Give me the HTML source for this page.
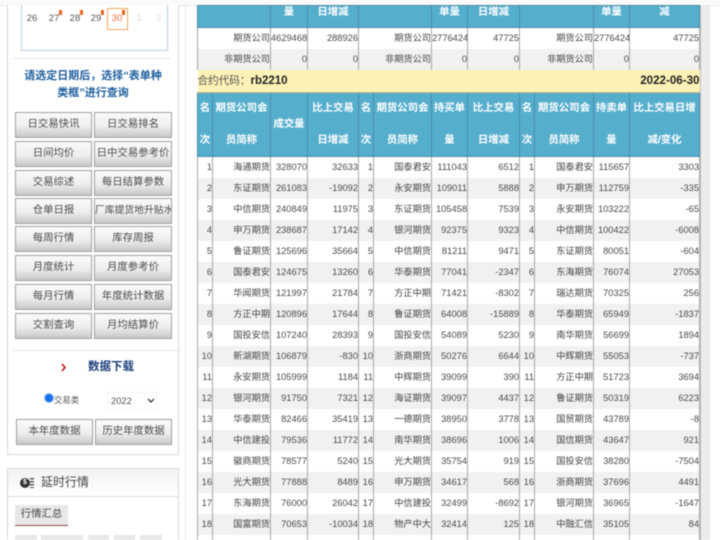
<!DOCTYPE html>
<html><head><meta charset="utf-8">
<style>
html,body{margin:0;padding:0;background:#fff;}
#p{position:relative;width:720px;height:540px;overflow:hidden;background:#fff;font-family:"Liberation Sans","Noto Sans CJK SC",sans-serif;filter:blur(.4px);}
.a{position:absolute;}
.b{position:absolute;width:75px;height:24px;line-height:24px;border:1px solid #a0a0a0;background:linear-gradient(#fafafa,#eeeeee 55%,#c8c8c8);text-align:center;font-size:10.4px;color:#4a4a4a;white-space:nowrap;overflow:hidden;box-sizing:content-box;}
.r{width:76px;}
.d{position:absolute;top:13px;width:20px;text-align:center;font-size:9.6px;color:#555;}
.m{position:absolute;width:3px;height:5px;background:#e8641e;top:10px;}
table{position:absolute;left:197px;top:5px;width:502px;border-collapse:collapse;table-layout:fixed;}
td{padding:0;height:21px;line-height:21px;font-size:9.3px;color:#4a4a4a;text-align:right;border-left:1px solid #a8a8a8;border-right:1px solid #a8a8a8;white-space:nowrap;overflow:hidden;box-sizing:border-box;}
td.n{font-size:9.2px;color:#444;}
tr.g td{background:#f1f1f1;}
tr.h td{background:#56aecd;color:#fff;font-weight:bold;font-size:10.4px;text-align:center;border:1px solid #4a8ca8;height:32px;line-height:31px;}
tr.h1 td{border-bottom:0;}
tr.h2 td{border-top:0;}
tr.t td{height:22px;line-height:13px;vertical-align:top;border-bottom:1px solid #4a8ca8;}
tr.y td{background:#fdf2b6;border:0;border-bottom:1px solid #c9b98a;color:#222;font-size:10px;height:21px;}
</style></head><body><div id="p">
<div class="a" style="left:0;top:0;width:720px;height:5px;background:#fafafa;border-bottom:1px solid #e8e8e8;"></div>
<!-- left panel -->
<div class="a" style="left:7px;top:5px;width:170px;height:449px;border:1px solid #d8d8d8;border-top:0;background:#fff;"></div>
<div class="a" style="left:185px;top:5px;width:1px;height:535px;background:#e6e6e6;"></div>
<div class="a" style="left:21px;top:5px;width:145px;height:45px;border:1px solid #b9cde3;border-top:0;"></div>
<div class="d" style="left:22px;">26</div><div class="d" style="left:44px;">27</div><div class="d" style="left:65px;">28</div><div class="d" style="left:86px;">29</div>
<div class="a" style="left:107px;top:8px;width:19px;height:20px;border:1px solid #f0a860;"></div>
<div class="d" style="left:107px;color:#f0703c;">30</div>
<div class="d" style="left:129px;color:#ddd;">1</div><div class="d" style="left:149px;color:#ddd;">2</div>
<div class="m" style="left:59px;"></div><div class="m" style="left:80px;"></div><div class="m" style="left:101px;"></div><div class="m" style="left:122px;"></div>
<div class="a" style="left:14px;top:58px;width:156px;height:1px;background:#e4e4e4;"></div>
<div class="a" style="left:14px;top:68px;width:158px;text-align:center;font-size:11px;line-height:17px;font-weight:bold;color:#1f5f9e;">请选定日期后，选择“表单种<br>类框”进行查询</div>

<div class="b" style="left:15px;top:112px;">日交易快讯</div><div class="b r" style="left:94px;top:112px;">日交易排名</div>
<div class="b" style="left:15px;top:141px;">日间均价</div><div class="b r" style="left:94px;top:141px;">日中交易参考价</div>
<div class="b" style="left:15px;top:170px;">交易综述</div><div class="b r" style="left:94px;top:170px;">每日结算参数</div>
<div class="b" style="left:15px;top:198px;">仓单日报</div><div class="b r" style="left:94px;top:198px;font-size:9.8px;">厂库提货地升贴水</div>
<div class="b" style="left:15px;top:226px;">每周行情</div><div class="b r" style="left:94px;top:226px;">库存周报</div>
<div class="b" style="left:15px;top:255px;">月度统计</div><div class="b r" style="left:94px;top:255px;">月度参考价</div>
<div class="b" style="left:15px;top:284px;">每月行情</div><div class="b r" style="left:94px;top:284px;">年度统计数据</div>
<div class="b" style="left:15px;top:313px;">交割查询</div><div class="b r" style="left:94px;top:313px;">月均结算价</div>

<div class="a" style="left:14px;top:350px;width:164px;height:1px;background:#e8e8e8;"></div>
<svg class="a" style="left:60px;top:363px;" width="7" height="9"><path d="M2 1 L5 4.5 L2 8" fill="none" stroke="#c0141c" stroke-width="1.6"/></svg>
<div class="a" style="left:88px;top:360px;font-size:11.5px;line-height:15px;font-weight:bold;color:#1d3f7c;">数据下载</div>
<div class="a" style="left:44px;top:393px;width:8px;height:8px;border-radius:50%;background:#1a73e8;border:1px solid #9cc0ee;"></div>
<div class="a" style="left:54px;top:395px;font-size:8.4px;line-height:11px;color:#555;">交易类</div>
<div class="a" style="left:107px;top:392px;width:50px;height:18px;border:1px solid #f4f4f4;box-sizing:border-box;"></div>
<div class="a" style="left:111px;top:395px;font-size:9.4px;line-height:12px;color:#555;">2022</div>
<svg class="a" style="left:147px;top:398px;" width="8" height="6"><path d="M1 1 L4 4 L7 1" fill="none" stroke="#444" stroke-width="1.4"/></svg>
<div class="b" style="left:16px;top:419px;">本年度数据</div><div class="b" style="left:95px;top:419px;">历史年度数据</div>

<!-- second panel -->
<div class="a" style="left:7px;top:468px;width:170px;height:80px;border:1px solid #d8d8d8;background:#fff;"></div>
<div class="a" style="left:8px;top:469px;width:170px;height:27px;background:linear-gradient(#f3f3f3,#fff);border-bottom:1px solid #dcdcdc;"></div>
<div class="a" style="left:20px;top:478px;width:10px;height:10px;line-height:10px;text-align:center;border-radius:50%;background:#333;color:#fff;font-size:7px;font-weight:bold;">$</div>
<div class="a" style="left:30px;top:478px;width:4px;height:10px;background:repeating-linear-gradient(#555 0 1.5px,#fff 1.5px 3px);"></div>
<div class="a" style="left:41px;top:474px;font-size:12px;line-height:17px;color:#444;">延时行情</div>
<div class="a" style="left:15px;top:505px;width:53px;height:20px;line-height:20px;background:#e8e8e8;border-bottom:1px solid #8a4a4a;text-align:center;font-size:10.4px;color:#444;">行情汇总</div>
<div class="a" style="left:15px;top:535px;width:22px;height:5px;background:#e8e8e8;"></div>
<div class="a" style="left:41px;top:535px;width:42px;height:5px;background:#e8e8e8;"></div>
<div class="a" style="left:88px;top:535px;width:21px;height:5px;background:#e8e8e8;"></div>
<div class="a" style="left:114px;top:535px;width:21px;height:5px;background:#e8e8e8;"></div>
<div class="a" style="left:140px;top:535px;width:22px;height:5px;background:#e8e8e8;"></div>

<!-- right strip -->
<div class="a" style="left:699px;top:5px;width:2px;height:535px;background:#bdbdbd;"></div>
<div class="a" style="left:701px;top:5px;width:9px;height:535px;background:#ececec;"></div>

<table>
<colgroup><col style="width:15px"><col style="width:58px"><col style="width:37px"><col style="width:51px"><col style="width:15px"><col style="width:58px"><col style="width:36px"><col style="width:52px"><col style="width:15px"><col style="width:59px"><col style="width:36px"><col style="width:70px"></colgroup>
<tr class="h t"><td colspan="2"></td><td>量</td><td>日增减</td><td colspan="2"></td><td>单量</td><td>日增减</td><td colspan="2"></td><td>单量</td><td>减</td></tr>
<tr><td colspan="2" class="n">期货公司</td><td>4629468</td><td>288926</td><td colspan="2" class="n">期货公司</td><td>2776424</td><td>47725</td><td colspan="2" class="n">期货公司</td><td>2776424</td><td>47725</td></tr>
<tr class="g"><td colspan="2" class="n">非期货公司</td><td>0</td><td>0</td><td colspan="2" class="n">非期货公司</td><td>0</td><td>0</td><td colspan="2" class="n">非期货公司</td><td>0</td><td>0</td></tr>
<tr class="y"><td colspan="6" style="text-align:left;font-size:10.6px;color:#555;">合约代码：<b style="color:#222;font-size:11.5px;">rb2210</b></td><td colspan="6"><b style="font-size:11.6px;">2022-06-30</b></td></tr>
<tr class="h h1"><td>名</td><td>期货公司会</td><td rowspan="2" style="border-bottom:1px solid #4a8ca8;">成交量</td><td>比上交易</td><td>名</td><td>期货公司会</td><td>持买单</td><td>比上交易</td><td>名</td><td>期货公司会</td><td>持卖单</td><td>比上交易日增</td></tr>
<tr class="h h2"><td>次</td><td>员简称</td><td>日增减</td><td>次</td><td>员简称</td><td>量</td><td>日增减</td><td>次</td><td>员简称</td><td>量</td><td>减/变化</td></tr>
<tr><td>1</td><td class="n">海通期货</td><td>328070</td><td>32633</td><td>1</td><td class="n">国泰君安</td><td>111043</td><td>6512</td><td>1</td><td class="n">国泰君安</td><td>115657</td><td>3303</td></tr>
<tr class="g"><td>2</td><td class="n">东证期货</td><td>261083</td><td>-19092</td><td>2</td><td class="n">永安期货</td><td>109011</td><td>5888</td><td>2</td><td class="n">申万期货</td><td>112759</td><td>-335</td></tr>
<tr><td>3</td><td class="n">中信期货</td><td>240849</td><td>11975</td><td>3</td><td class="n">东证期货</td><td>105458</td><td>7539</td><td>3</td><td class="n">永安期货</td><td>103222</td><td>-65</td></tr>
<tr class="g"><td>4</td><td class="n">申万期货</td><td>238687</td><td>17142</td><td>4</td><td class="n">银河期货</td><td>92375</td><td>9323</td><td>4</td><td class="n">中信期货</td><td>100422</td><td>-6008</td></tr>
<tr><td>5</td><td class="n">鲁证期货</td><td>125696</td><td>35664</td><td>5</td><td class="n">中信期货</td><td>81211</td><td>9471</td><td>5</td><td class="n">东证期货</td><td>80051</td><td>-604</td></tr>
<tr class="g"><td>6</td><td class="n">国泰君安</td><td>124675</td><td>13260</td><td>6</td><td class="n">华泰期货</td><td>77041</td><td>-2347</td><td>6</td><td class="n">东海期货</td><td>76074</td><td>27053</td></tr>
<tr><td>7</td><td class="n">华闻期货</td><td>121997</td><td>21784</td><td>7</td><td class="n">方正中期</td><td>71421</td><td>-8302</td><td>7</td><td class="n">瑞达期货</td><td>70325</td><td>256</td></tr>
<tr class="g"><td>8</td><td class="n">方正中期</td><td>120896</td><td>17644</td><td>8</td><td class="n">鲁证期货</td><td>64008</td><td>-15889</td><td>8</td><td class="n">华泰期货</td><td>65949</td><td>-1837</td></tr>
<tr><td>9</td><td class="n">国投安信</td><td>107240</td><td>28393</td><td>9</td><td class="n">国投安信</td><td>54089</td><td>5230</td><td>9</td><td class="n">南华期货</td><td>56699</td><td>1894</td></tr>
<tr class="g"><td>10</td><td class="n">新湖期货</td><td>106879</td><td>-830</td><td>10</td><td class="n">浙商期货</td><td>50276</td><td>6644</td><td>10</td><td class="n">中辉期货</td><td>55053</td><td>-737</td></tr>
<tr><td>11</td><td class="n">永安期货</td><td>105999</td><td>1184</td><td>11</td><td class="n">中辉期货</td><td>39099</td><td>390</td><td>11</td><td class="n">方正中期</td><td>51723</td><td>3694</td></tr>
<tr class="g"><td>12</td><td class="n">银河期货</td><td>91750</td><td>7321</td><td>12</td><td class="n">海证期货</td><td>39097</td><td>4437</td><td>12</td><td class="n">鲁证期货</td><td>50319</td><td>6223</td></tr>
<tr><td>13</td><td class="n">华泰期货</td><td>82466</td><td>35419</td><td>13</td><td class="n">一德期货</td><td>38950</td><td>3778</td><td>13</td><td class="n">国贸期货</td><td>43789</td><td>-8</td></tr>
<tr class="g"><td>14</td><td class="n">中信建投</td><td>79536</td><td>11772</td><td>14</td><td class="n">南华期货</td><td>38696</td><td>1006</td><td>14</td><td class="n">国信期货</td><td>43647</td><td>921</td></tr>
<tr><td>15</td><td class="n">徽商期货</td><td>78577</td><td>5240</td><td>15</td><td class="n">光大期货</td><td>35754</td><td>919</td><td>15</td><td class="n">国投安信</td><td>38280</td><td>-7504</td></tr>
<tr class="g"><td>16</td><td class="n">光大期货</td><td>77888</td><td>8489</td><td>16</td><td class="n">申万期货</td><td>34617</td><td>568</td><td>16</td><td class="n">浙商期货</td><td>37696</td><td>4491</td></tr>
<tr><td>17</td><td class="n">东海期货</td><td>76000</td><td>26042</td><td>17</td><td class="n">中信建投</td><td>32499</td><td>-8692</td><td>17</td><td class="n">银河期货</td><td>36965</td><td>-1647</td></tr>
<tr class="g"><td>18</td><td class="n">国富期货</td><td>70653</td><td>-10034</td><td>18</td><td class="n">物产中大</td><td>32414</td><td>125</td><td>18</td><td class="n">中融汇信</td><td>35105</td><td>84</td></tr>
<tr><td></td><td></td><td></td><td></td><td></td><td></td><td></td><td></td><td></td><td></td><td></td><td></td></tr>
</table>
</div></body></html>
